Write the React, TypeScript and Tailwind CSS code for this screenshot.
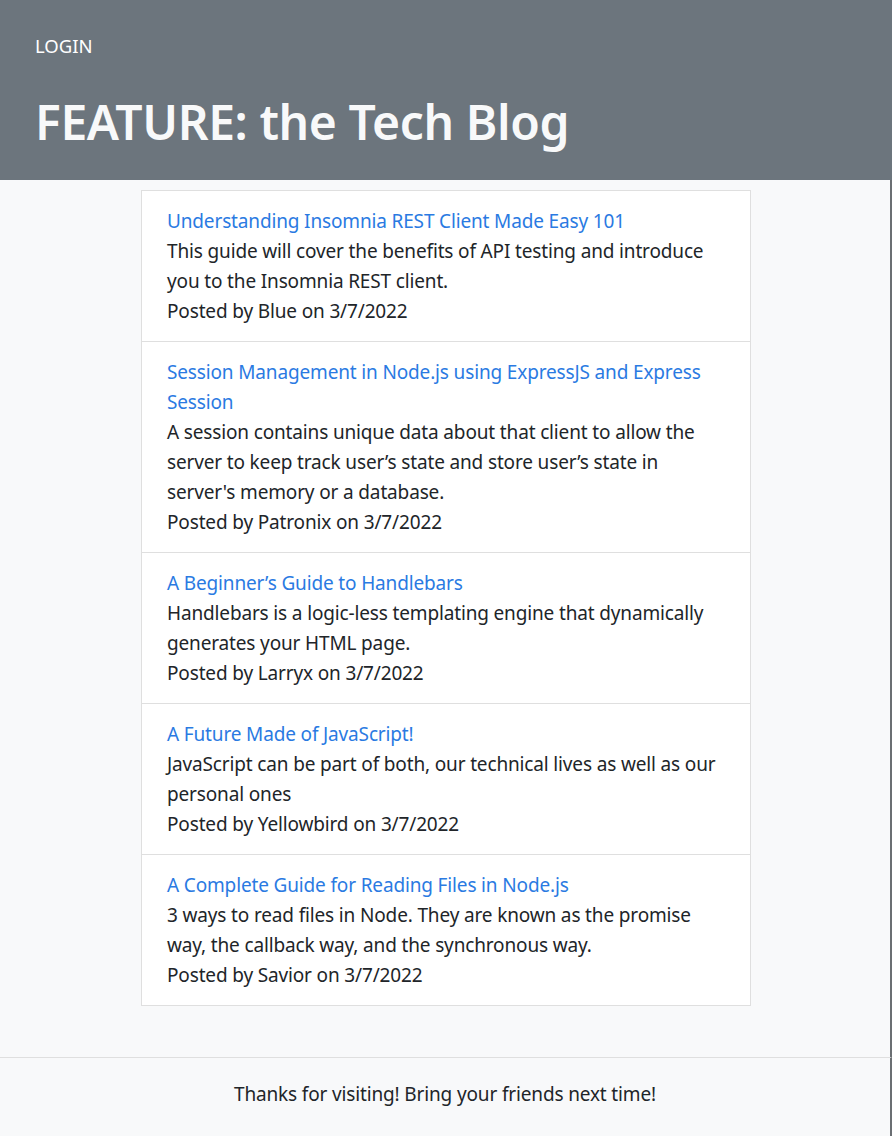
const posts = [
  {
    title: "Understanding Insomnia REST Client Made Easy 101",
    body: "This guide will cover the benefits of API testing and introduce you to the Insomnia REST client.",
    author: "Blue",
  },
  {
    title: "Session Management in Node.js using ExpressJS and Express Session",
    body: "A session contains unique data about that client to allow the server to keep track user\u2019s state and store user\u2019s state in server's memory or a database.",
    author: "Patronix",
  },
  {
    title: "A Beginner\u2019s Guide to Handlebars",
    body: "Handlebars is a logic-less templating engine that dynamically generates your HTML page.",
    author: "Larryx",
  },
  {
    title: "A Future Made of JavaScript!",
    body: "JavaScript can be part of both, our technical lives as well as our personal ones",
    author: "Yellowbird",
  },
  {
    title: "A Complete Guide for Reading Files in Node.js",
    body: "3 ways to read files in Node. They are known as the promise way, the callback way, and the synchronous way.",
    author: "Savior",
  },
];

export default function App() {
  return (
    <div
      className="min-h-screen flex flex-col bg-[#f8f9fa] text-[#212529] text-[19px] leading-[30px] tracking-[-0.15px]"
      style={{ fontFamily: "'Noto Sans', 'Open Sans', sans-serif" }}
    >
      <header className="bg-[#6c757d] h-[180px] px-[35px] pt-[31px] text-[#f8f9fa]">
        <a href="#" className="block text-[18.5px] leading-[30px] tracking-normal text-white">
          LOGIN
        </a>
        <h1 className="mt-[31px] text-[48px] leading-[60px] font-semibold tracking-[-0.4px]">FEATURE: the Tech Blog</h1>
      </header>

      <main className="flex-1 pt-[10px] pb-[51px] pl-[2px] border-r-2 border-[#6b6f73]">
        <ul className="w-[610px] mx-auto bg-white border border-[#dfdfdf]">
          {posts.map((post, i) => (
            <li key={i} className={`px-[25px] py-[15px] ${i > 0 ? "border-t border-[#dfdfdf]" : ""}`}>
              <a href="#" className="block text-[#2a7ae2]">
                {post.title}
              </a>
              <p>{post.body}</p>
              <p>Posted by {post.author} on 3/7/2022</p>
            </li>
          ))}
        </ul>
      </main>

      <footer className="h-[80px] border-t border-[#dfdfdf] border-r-2 border-r-[#6b6f73] flex justify-center pt-[21px]">
        <p>Thanks for visiting! Bring your friends next time!</p>
      </footer>
    </div>
  );
}
